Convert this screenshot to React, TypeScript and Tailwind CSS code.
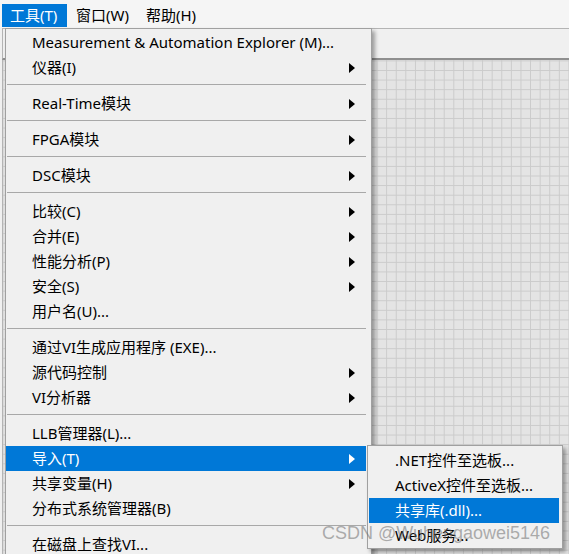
import React from "react";

type Item = { label: string; arrow?: boolean; active?: boolean } | "sep";

const items: Item[] = [
  { label: "Measurement & Automation Explorer (M)..." },
  { label: "仪器(I)", arrow: true },
  "sep",
  { label: "Real-Time模块", arrow: true },
  "sep",
  { label: "FPGA模块", arrow: true },
  "sep",
  { label: "DSC模块", arrow: true },
  "sep",
  { label: "比较(C)", arrow: true },
  { label: "合并(E)", arrow: true },
  { label: "性能分析(P)", arrow: true },
  { label: "安全(S)", arrow: true },
  { label: "用户名(U)..." },
  "sep",
  { label: "通过VI生成应用程序 (EXE)..." },
  { label: "源代码控制", arrow: true },
  { label: "VI分析器", arrow: true },
  "sep",
  { label: "LLB管理器(L)..." },
  { label: "导入(T)", arrow: true, active: true },
  { label: "共享变量(H)", arrow: true },
  { label: "分布式系统管理器(B)" },
  "sep",
  { label: "在磁盘上查找VI..." },
];

const subItems = [
  { label: ".NET控件至选板..." },
  { label: "ActiveX控件至选板..." },
  { label: "共享库(.dll)...", active: true },
  { label: "Web服务..." },
];

function Arrow({ white }: { white?: boolean }) {
  return (
    <svg width="6" height="10" viewBox="0 0 6 10" className="ml-auto mr-[11px] shrink-0">
      <polygon points="0,0 6,5 0,10" fill={white ? "#ffffff" : "#000000"} />
    </svg>
  );
}

export default function App() {
  return (
    <div className="relative w-[569px] h-[554px] overflow-hidden bg-[#f0f0f0] font-['Noto_Sans','Noto_Sans_CJK_SC',sans-serif] text-[15px] text-black">
      {/* menu bar */}
      <div className="h-[28px] flex items-end bg-[#f5f5f5] pl-[2px] pb-[1px]">
        <div className="h-[23px] w-[65px] pl-[8px] flex items-center bg-[#0078d7] text-white leading-none">工具(T)</div>
        <div className="h-[23px] w-[70px] pl-[9px] flex items-center leading-none">窗口(W)</div>
        <div className="h-[23px] w-[70px] pl-[9px] flex items-center leading-none">帮助(H)</div>
      </div>
      {/* toolbar strip */}
      <div className="h-[32px] border-t border-t-[#b4b4b4] border-b-2 border-b-[#8f8f8f] bg-[#f0f0f0] border-l border-l-[#b4b4b4] ml-[2px]" />
      {/* grid */}
      <div className="h-[494px] ml-[2px] border-l border-l-[#b4b4b4] bg-[#e4e4e4] [background-image:linear-gradient(to_right,#cbcbcb_1px,transparent_1px),linear-gradient(to_bottom,#cbcbcb_1px,transparent_1px)] [background-size:9.6px_9.6px] [background-position:-0.6px_0.4px]" />

      {/* main dropdown menu */}
      <div className="absolute left-[5px] top-[28px] w-[367px] h-[540px] flex flex-col bg-[#f0f0f0] border border-[#a0a0a0] pt-[1px] pr-[5px] shadow-[3px_3px_4px_rgba(0,0,0,0.35)]">
        {items.map((it, i) =>
          it === "sep" ? (
            <div key={i} className="h-[11px] pt-[4px] pl-[1px]">
              <div className="h-px bg-[#a8a8a8]" />
            </div>
          ) : (
            <div
              key={i}
              className={
                "h-[25px] pl-[26px] flex items-center whitespace-nowrap leading-none " +
                (it.active ? "bg-[#0078d7] text-white" : "")
              }
            >
              {it.label}
              {it.arrow && <Arrow white={it.active} />}
            </div>
          )
        )}
      </div>

      {/* submenu */}
      <div className="absolute left-[367px] top-[445px] w-[196px] h-[104px] flex flex-col bg-[#f0f0f0] border border-[#a0a0a0] pt-[2px] pl-[1px] pr-[3px] shadow-[3px_3px_4px_rgba(0,0,0,0.35)]">
        {subItems.map((it, i) => (
          <div
            key={i}
            className={
              "h-[25px] pl-[26px] flex items-center whitespace-nowrap leading-none " +
              (it.active ? "bg-[#0078d7] text-white" : "")
            }
          >
            {it.label}
          </div>
        ))}
      </div>

      {/* watermark */}
      <div className="absolute left-[322px] top-[524px] font-['Liberation_Sans',sans-serif] text-[18px] leading-none text-[rgba(110,110,110,0.55)] whitespace-nowrap pointer-events-none">
        CSDN @Wuhengaowei5146
      </div>
    </div>
  );
}
